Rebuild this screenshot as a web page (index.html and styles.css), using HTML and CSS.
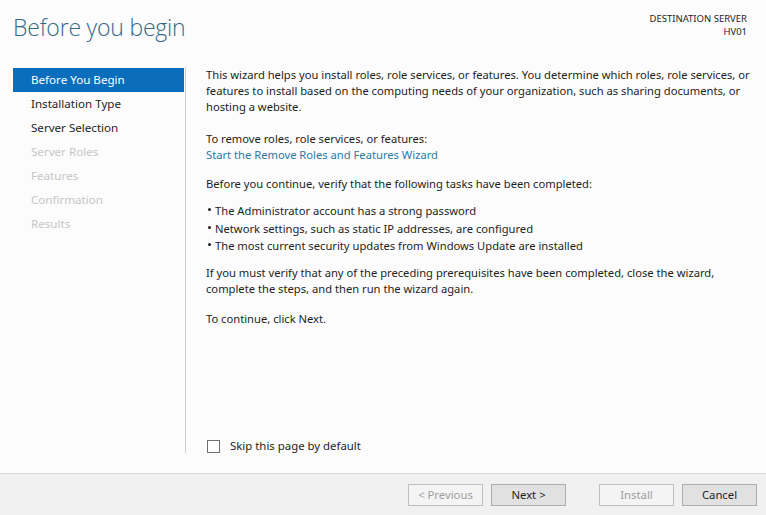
FILE: index.html
```html
<!DOCTYPE html>
<html lang="en">
<head>
<meta charset="utf-8">
<title>Add Roles and Features Wizard</title>
<link rel="stylesheet" href="styles.css">
</head>
<body>
<div class="wizard">
  <header class="header">
    <h1 class="title">Before you begin</h1>
    <div class="dest">
      <div>DESTINATION SERVER</div>
      <div>HV01</div>
    </div>
  </header>
  <div class="main">
    <nav class="nav">
      <div class="nav-item active">Before You Begin</div>
      <div class="nav-item">Installation Type</div>
      <div class="nav-item">Server Selection</div>
      <div class="nav-item disabled">Server Roles</div>
      <div class="nav-item disabled">Features</div>
      <div class="nav-item disabled">Confirmation</div>
      <div class="nav-item disabled">Results</div>
    </nav>
    <section class="content">
      <p class="p1">This wizard helps you install roles, role services, or features. You determine which roles, role services, or<br>features to install based on the computing needs of your organization, such as sharing documents, or<br>hosting a website.</p>
      <p class="p2">To remove roles, role services, or features:<br><a class="link" href="#">Start the Remove Roles and Features Wizard</a></p>
      <p class="p3">Before you continue, verify that the following tasks have been completed:</p>
      <ul class="tasks">
        <li>The Administrator account has a strong password</li>
        <li>Network settings, such as static IP addresses, are configured</li>
        <li>The most current security updates from Windows Update are installed</li>
      </ul>
      <p class="p4">If you must verify that any of the preceding prerequisites have been completed, close the wizard,<br>complete the steps, and then run the wizard again.</p>
      <p class="p5">To continue, click Next.</p>
      <label class="skip"><span class="box"></span><span>Skip this page by default</span></label>
    </section>
  </div>
  <footer class="footer">
    <button class="btn disabled">&lt; Previous</button>
    <button class="btn">Next &gt;</button>
    <button class="btn disabled gap">Install</button>
    <button class="btn">Cancel</button>
  </footer>
</div>
</body>
</html>
```
FILE: styles.css
```css
* { box-sizing: border-box; }
html, body { margin: 0; padding: 0; }
body {
  width: 766px;
  height: 515px;
  background: #fcfcfc;
  font-family: "Noto Sans", "Open Sans", sans-serif;
  font-size: 11.2px;
  color: #1e1e1e;
  overflow: hidden;
}
.wizard {
  display: flex;
  flex-direction: column;
  height: 515px;
}
.header {
  height: 67px;
  display: flex;
  justify-content: space-between;
  align-items: flex-start;
  padding: 0 19px 0 13px;
}
.title {
  margin: 11px 0 0 0;
  font-family: "Open Sans", "Noto Sans", sans-serif;
  font-weight: 300;
  font-size: 23px;
  line-height: 32px;
  color: #35698a;
  letter-spacing: -0.2px;
}
.dest {
  margin-top: 12px;
  text-align: right;
  font-size: 9.5px;
  line-height: 13px;
  color: #1e1e1e;
}
.main {
  flex: 1;
  display: flex;
  margin-bottom: 20px;
}
.nav {
  width: 173px;
  margin-left: 13px;
  border-right: 1px solid #cfcfcf;
  padding-right: 1px;
  padding-top: 1px;
}
.nav-item {
  height: 24px;
  line-height: 24px;
  padding-left: 18px;
  font-size: 11.6px;
  color: #1e1e1e;
}
.nav-item.active {
  background: #0a6ebd;
  color: #ffffff;
}
.nav-item.disabled { color: #c6c6c6; }
.content {
  flex: 1;
  display: flex;
  flex-direction: column;
  padding-left: 20px;
  line-height: 16px;
}
.content p { margin: 0; }
.p2 { margin-top: 16px !important; }
.p3 { margin-top: 13px !important; }
.link { color: #2b79a6; text-decoration: none; }
.tasks {
  list-style: none;
  margin: 10px 0 0 0;
  padding: 0;
  line-height: 17.5px;
}
.tasks li {
  position: relative;
  padding-left: 9px;
}
.tasks li::before {
  content: "";
  position: absolute;
  left: 2px;
  top: 6px;
  width: 3px;
  height: 3px;
  border-radius: 50%;
  background: #1e1e1e;
}
.p4 { margin-top: 10.5px !important; }
.p5 { margin-top: 14px !important; }
.skip {
  margin-top: auto;
  display: flex;
  align-items: center;
  gap: 10px;
  font-size: 11.4px;
  line-height: 16px;
  margin-bottom: -1px;
  padding-left: 1px;
}
.box {
  width: 13px;
  height: 13px;
  border: 1px solid #707070;
  background: #ffffff;
}
.footer {
  height: 42px;
  background: #f0f0f0;
  border-top: 1px solid #d9d9d9;
  display: flex;
  justify-content: flex-end;
  align-items: flex-start;
  padding: 10px 9px 0 0;
  gap: 8px;
}
.btn {
  width: 75px;
  height: 22px;
  border: 1px solid #adadad;
  background: #e1e1e1;
  font-family: "Noto Sans", "Open Sans", sans-serif;
  font-size: 11.3px;
  color: #1e1e1e;
  padding: 0;
  line-height: 20px;
}
.btn.disabled {
  background: #f4f4f4;
  border-color: #bfbfbf;
  color: #9e9e9e;
}
.btn.gap { margin-left: 25px; }
```
